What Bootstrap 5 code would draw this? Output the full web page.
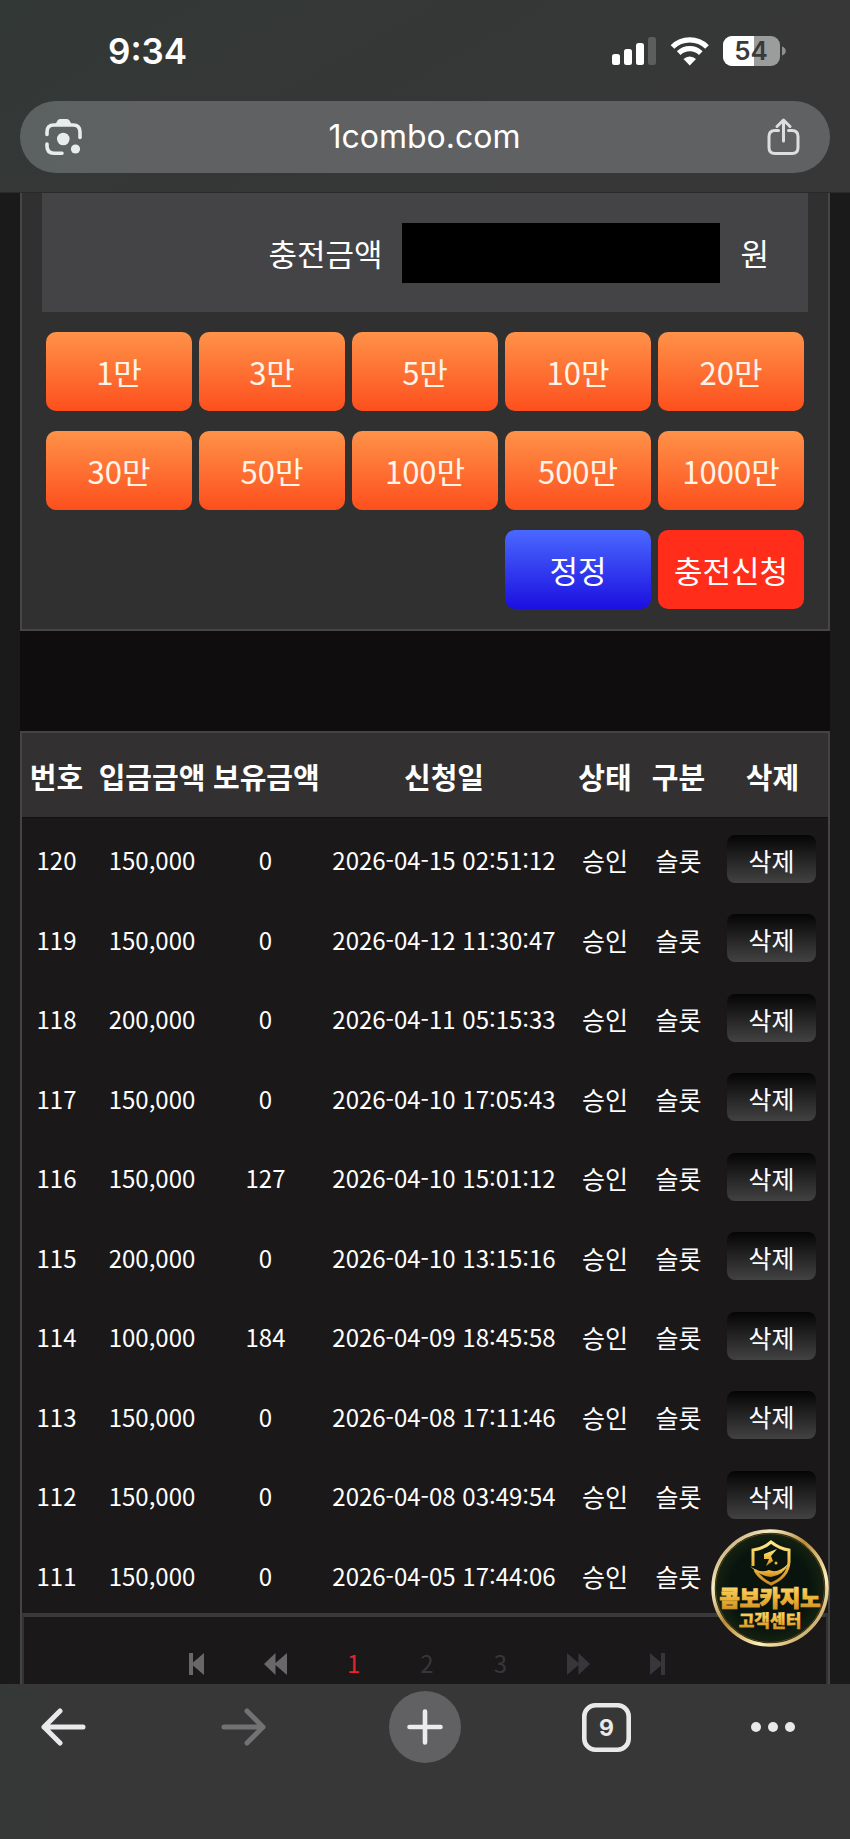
<!DOCTYPE html>
<html lang="ko" data-bs-theme="dark">
<head>
<meta charset="utf-8">
<meta name="viewport" content="width=device-width, initial-scale=1">
<title>1combo.com</title>
<link href="https://cdn.jsdelivr.net/npm/bootstrap@5.3.0/dist/css/bootstrap.min.css" rel="stylesheet">
<style>
  body { background: #1a1a1a; color: #fff; font-family: "Noto Sans CJK KR", sans-serif; }
  button { color: inherit; }

  /* browser chrome */
  .chrome-top { background: linear-gradient(150deg, #323836 0%, #353736 45%, #373738 70%); border-bottom: 1px solid #292a2a; font-family: Inter, sans-serif; }
  .status-row { height: 101px; padding: 0 63px 0 108px; }
  .clock { font-size: 35px; font-weight: 600; line-height: 40px; }
  .address { height: 72px; margin: 0 20px 19px; padding: 0 30px 0 25px; border-radius: 36px; background: linear-gradient(90deg, #5b6261 0, #606163 18%); }
  .address .host { font-size: 32px; line-height: 40px; color: #fff; background: none; border: 0; text-align: center; outline: 0; min-width: 0; }
  .bare { background: none; border: 0; padding: 0; line-height: 1; }
  .bare svg { display: block; margin: 0 auto; }
  .chrome-bottom { height: 155px; padding: 7px 55px 0 27px; background: linear-gradient(90deg, #343936 0, #373738 5%); font-family: Inter, sans-serif; }
  .tool { width: 72px; height: 72px; }
  .tool-more { width: 44px; }
  .tool-new { background: #616163; border-radius: 50%; }

  /* page */
  .page-col { margin: 0 20px; background: #0f0d0e; }
  .charge { background: #313031; border: 2px solid #464648; border-top: 0; padding: 0 20px 20px; }
  .amount { background: #444446; padding: 30px 39px 29px 20px; gap: 20px; margin-bottom: 20px; font-size: 31px; line-height: 60px; }
  .amount input { width: 318px; height: 60px; background: #000; border: 0; color: #fff; padding: 0 12px; }
  .keys { display: grid; grid-template-columns: repeat(5, 1fr); gap: 20px 7px; padding: 0 4px; }
  .key { height: 79px; border: 0; border-radius: 10px; padding: 0; font-size: 31px; line-height: 40px; white-space: nowrap; color: #fff4e8; background: linear-gradient(#ff9249, #fd4f1d); }
  .key-reset { color: #fff; background: linear-gradient(#4a69ff, #1b0fe0); grid-column: 4; }
  .key-send { color: #fff; background: #ff2d1a; }

  .history { margin-top: 100px; background: #1a1819; border: 2px solid #444446; border-bottom: 0; }
  .history table { width: 100%; table-layout: fixed; text-align: center; border-collapse: separate; border-spacing: 0; white-space: nowrap; }
  .history th { height: 85px; padding: 2px 0 0; background: #323031; font-size: 29px; line-height: 40px; font-weight: 700; border-bottom: 1px solid #111; }
  .history td { height: 79px; padding: 5px 0 0; font-size: 24px; line-height: 36px; }
  .history tr:nth-child(even) td { height: 80px; }
  .c-no { width: 69px; } .c-in { width: 122px; } .c-own { width: 105px; } .c-date { width: 252px; }
  .c-state { width: 70px; } .c-kind { width: 77px; } .c-del { width: 111px; }
  .history td.hangul { font-size: 25px; }
  .history td.cell-del { padding: 2px 2px 0 0; }
  .del { width: 89px; height: 48px; border: 0; border-radius: 8px; padding: 2px 0 0; font-size: 25px; line-height: 36px; background: linear-gradient(#060506, #434243); vertical-align: middle; }

  .pager { border: 2px solid #343334; border-top: 4px solid #3a393a; border-bottom: 0; height: 71px; padding: 28px 0 0 4px; gap: 60px; font-size: 24px; line-height: 36px; }
  .pager a { color: #38363a; text-decoration: none; display: block; }
  .pager .on { color: #e6242a; }
  .pager .lit { color: #69676a; }
  .pager svg { display: block; }

  .support { position: absolute; right: 21px; bottom: 37px; width: 118px; height: 118px; }
</style>
</head>
<body class="d-flex flex-column min-vh-100">

<header class="chrome-top">
  <div class="status-row d-flex align-items-center justify-content-between">
    <span class="clock">9:34</span>
    <div class="d-flex align-items-center">
      <svg width="175" height="32" viewBox="0 0 175 32" fill="#fff" aria-label="Signal, Wi-Fi, battery">
        <rect x="0" y="19" width="8" height="11" rx="2.5"/>
        <rect x="12" y="14" width="8" height="16" rx="2.5"/>
        <rect x="24" y="8" width="8" height="22" rx="2.5"/>
        <rect x="36" y="2" width="8" height="28" rx="2.5" fill="#5c5e5d"/>
        <g fill="none" stroke="#fff" stroke-width="5.2">
          <path d="M60.500 12 A24.500 24.500 0 0 1 95 12"/>
          <path d="M66.700 18.200 A15.800 15.800 0 0 1 88.800 18.200"/>
        </g>
        <path d="M71.500 24 A9 9 0 0 1 84 24 L77.750 30.500Z"/>
        <clipPath id="cell"><rect x="111" y="1" width="57" height="30" rx="9"/></clipPath>
        <g clip-path="url(#cell)"><rect x="111" y="1" width="57" height="30" fill="#9b9c9c"/><rect x="111" y="1" width="31" height="30"/></g>
        <path d="M170 11.500 C175 13 175 19 170 20.500Z" fill="#8e8f8f"/>
        <text x="139" y="25" font-size="26" font-weight="600" fill="#393b3a" text-anchor="middle">54</text>
      </svg>
    </div>
  </div>
  <div class="address d-flex align-items-center justify-content-between">
    <button class="bare" aria-label="Lens">
      <svg width="37" height="38" viewBox="0 0 37 38" fill="none" stroke="#e8ecec" stroke-width="3.600" stroke-linecap="round">
        <path d="M2 16.500V14Q2 7 9 7H28Q35 7 35 14V19.500"/>
        <path d="M2 26V28Q2 35.200 9 35.200H17"/>
        <path d="M10 7L12.500 2.500Q13.300 1 15 1H22Q23.700 1 24.500 2.500L27 7Z" fill="#e8ecec" stroke="none"/>
        <circle cx="18.300" cy="21" r="6.300" fill="#e8ecec" stroke="none"/>
        <circle cx="30.500" cy="31" r="4.600" fill="#e8ecec" stroke="none"/>
      </svg>
    </button>
    <input class="host flex-fill" type="text" value="1combo.com" aria-label="Address">
    <button class="bare" aria-label="Share">
      <svg width="33" height="38" viewBox="0 0 33 38" fill="none" stroke="#dedee0" stroke-width="3" stroke-linecap="round" stroke-linejoin="round">
        <path d="M11.500 12.500H8Q2 12.500 2 18.500V29.500Q2 35.500 8 35.500H25Q31 35.500 31 29.500V18.500Q31 12.500 25 12.500H21.500"/>
        <path d="M16.500 23V2.500M10 8.500L16.500 2L23 8.500"/>
      </svg>
    </button>
  </div>
</header>

<main class="flex-fill position-relative d-flex flex-column">
  <div class="page-col flex-fill d-flex flex-column">
    <form class="charge" onsubmit="return false">
      <div class="amount d-flex align-items-center justify-content-end">
        <label for="amount">충전금액</label>
        <input id="amount" type="text" inputmode="numeric">
        <span>원</span>
      </div>
      <div class="keys">
        <button type="button" class="key">1만</button>
        <button type="button" class="key">3만</button>
        <button type="button" class="key">5만</button>
        <button type="button" class="key">10만</button>
        <button type="button" class="key">20만</button>
        <button type="button" class="key">30만</button>
        <button type="button" class="key">50만</button>
        <button type="button" class="key">100만</button>
        <button type="button" class="key">500만</button>
        <button type="button" class="key">1000만</button>
        <button type="reset" class="key key-reset">정정</button>
        <button type="submit" class="key key-send">충전신청</button>
      </div>
    </form>

    <section class="history flex-fill d-flex flex-column">
      <table>
        <colgroup><col class="c-no"><col class="c-in"><col class="c-own"><col class="c-date"><col class="c-state"><col class="c-kind"><col class="c-del"></colgroup>
        <thead>
          <tr><th>번호</th><th>입금금액</th><th>보유금액</th><th>신청일</th><th>상태</th><th>구분</th><th>삭제</th></tr>
        </thead>
        <tbody>
          <tr><td>120</td><td>150,000</td><td>0</td><td>2026-04-15 02:51:12</td><td class="hangul">승인</td><td class="hangul">슬롯</td><td class="cell-del"><button class="del">삭제</button></td></tr>
          <tr><td>119</td><td>150,000</td><td>0</td><td>2026-04-12 11:30:47</td><td class="hangul">승인</td><td class="hangul">슬롯</td><td class="cell-del"><button class="del">삭제</button></td></tr>
          <tr><td>118</td><td>200,000</td><td>0</td><td>2026-04-11 05:15:33</td><td class="hangul">승인</td><td class="hangul">슬롯</td><td class="cell-del"><button class="del">삭제</button></td></tr>
          <tr><td>117</td><td>150,000</td><td>0</td><td>2026-04-10 17:05:43</td><td class="hangul">승인</td><td class="hangul">슬롯</td><td class="cell-del"><button class="del">삭제</button></td></tr>
          <tr><td>116</td><td>150,000</td><td>127</td><td>2026-04-10 15:01:12</td><td class="hangul">승인</td><td class="hangul">슬롯</td><td class="cell-del"><button class="del">삭제</button></td></tr>
          <tr><td>115</td><td>200,000</td><td>0</td><td>2026-04-10 13:15:16</td><td class="hangul">승인</td><td class="hangul">슬롯</td><td class="cell-del"><button class="del">삭제</button></td></tr>
          <tr><td>114</td><td>100,000</td><td>184</td><td>2026-04-09 18:45:58</td><td class="hangul">승인</td><td class="hangul">슬롯</td><td class="cell-del"><button class="del">삭제</button></td></tr>
          <tr><td>113</td><td>150,000</td><td>0</td><td>2026-04-08 17:11:46</td><td class="hangul">승인</td><td class="hangul">슬롯</td><td class="cell-del"><button class="del">삭제</button></td></tr>
          <tr><td>112</td><td>150,000</td><td>0</td><td>2026-04-08 03:49:54</td><td class="hangul">승인</td><td class="hangul">슬롯</td><td class="cell-del"><button class="del">삭제</button></td></tr>
          <tr><td>111</td><td>150,000</td><td>0</td><td>2026-04-05 17:44:06</td><td class="hangul">승인</td><td class="hangul">슬롯</td><td class="cell-del"></td></tr>
        </tbody>
      </table>
      <nav class="pager flex-grow-1 d-flex justify-content-center align-items-start" aria-label="페이지">
        <a class="lit pt-2" href="#" aria-label="처음"><svg width="15" height="22" viewBox="0 0 15 22" fill="currentColor"><path d="M0 0H4V9.500L15 0V22L4 12.500V22H0Z"/></svg></a>
        <a class="lit pt-2" href="#" aria-label="이전"><svg width="23" height="22" viewBox="0 0 23 22" fill="currentColor"><path d="M11.500 0V10L23 0V22L11.500 12V22L0 11Z"/></svg></a>
        <a class="on" href="#" aria-current="page">1</a>
        <a href="#">2</a>
        <a href="#">3</a>
        <a class="pt-2" href="#" aria-label="다음"><svg width="23" height="22" viewBox="0 0 23 22" fill="currentColor"><path d="M11.500 0V10L0 0V22L11.500 12V22L23 11Z"/></svg></a>
        <a class="pt-2" href="#" aria-label="끝"><svg width="15" height="22" viewBox="0 0 15 22" fill="currentColor"><path d="M15 0H11V9.500L0 0V22L11 12.500V22H15Z"/></svg></a>
      </nav>
    </section>
  </div>

  <a class="support" href="#">
    <svg class="d-block w-100 h-100" viewBox="0 0 118 118">
      <defs>
        <linearGradient id="rim" x1="0" y1="0" x2="1" y2="1"><stop offset="0" stop-color="#a07a3c"/><stop offset=".25" stop-color="#f8eec8"/><stop offset=".45" stop-color="#b98a3a"/><stop offset=".7" stop-color="#fff0b8"/><stop offset="1" stop-color="#a5772b"/></linearGradient>
        <linearGradient id="gold" x1="0" y1="0" x2="0" y2="1"><stop offset="0" stop-color="#ffe98a"/><stop offset=".55" stop-color="#efb638"/><stop offset="1" stop-color="#c98a25"/></linearGradient>
        <radialGradient id="felt"><stop offset="0" stop-color="#0b120c"/><stop offset=".7" stop-color="#08150e"/><stop offset="1" stop-color="#172310"/></radialGradient>
      </defs>
      <circle cx="59" cy="59" r="57" fill="url(#felt)" stroke="url(#rim)" stroke-width="3.500"/>
      <circle cx="59" cy="59" r="54.500" fill="none" stroke="#51451c" stroke-width="1"/>
      <path d="M42 37V21Q52 20 60 13Q69 20 78 21V33Q77 48 60 55Q49 50 44 41" fill="none" stroke="url(#gold)" stroke-width="3"/>
      <path d="M39 37Q49 45 58 41Q67 45 77 35Q73 46 60 48Q48 47 39 37Z" fill="url(#gold)"/>
      <path d="M53 25L66 20L60 27L62 32L55 37L58 30L53 30Z" fill="url(#gold)"/>
      <circle cx="65" cy="34" r="1.500" fill="#efb638"/>
      <g fill="url(#gold)" font-weight="900" text-anchor="middle" stroke="url(#gold)">
        <text x="59" y="77" font-size="22" stroke-width="1">콤보카지노</text>
        <text x="59" y="98" font-size="17" stroke-width="0.300">고객센터</text>
      </g>
    </svg>
  </a>
</main>

<footer class="chrome-bottom d-flex align-items-start justify-content-between">
  <button class="bare tool" aria-label="Back"><svg width="46" height="38" viewBox="0 0 46 38" fill="none" stroke="#e9e9eb" stroke-width="5" stroke-linecap="round" stroke-linejoin="round"><path d="M43 19H4M20 3L4 19L20 35"/></svg></button>
  <button class="bare tool" aria-label="Forward"><svg width="46" height="38" viewBox="0 0 46 38" fill="none" stroke="#727274" stroke-width="5" stroke-linecap="round" stroke-linejoin="round"><path d="M3 19H42M26 3L42 19L26 35"/></svg></button>
  <button class="bare tool tool-new" aria-label="New tab"><svg width="36" height="36" viewBox="0 0 36 36" fill="none" stroke="#ececee" stroke-width="4.600" stroke-linecap="round"><path d="M2.500 18H33.500M18 2.500V33.500"/></svg></button>
  <button class="bare tool" aria-label="Tabs"><svg width="49" height="49" viewBox="0 0 49 49"><rect x="2.300" y="2.300" width="44.400" height="44.400" rx="11" fill="none" stroke="#e9e9eb" stroke-width="4.600"/><text x="24.500" y="33" font-size="23" font-weight="700" text-anchor="middle" fill="#e9e9eb" font-family="Inter, sans-serif">9</text></svg></button>
  <button class="bare tool tool-more" aria-label="More"><svg width="44" height="10" viewBox="0 0 44 10" fill="#e9e9eb"><circle cx="5" cy="5" r="5"/><circle cx="22" cy="5" r="5"/><circle cx="39" cy="5" r="5"/></svg></button>
</footer>

<script src="https://cdn.jsdelivr.net/npm/bootstrap@5.3.0/dist/js/bootstrap.bundle.min.js"></script>
</body>
</html>
